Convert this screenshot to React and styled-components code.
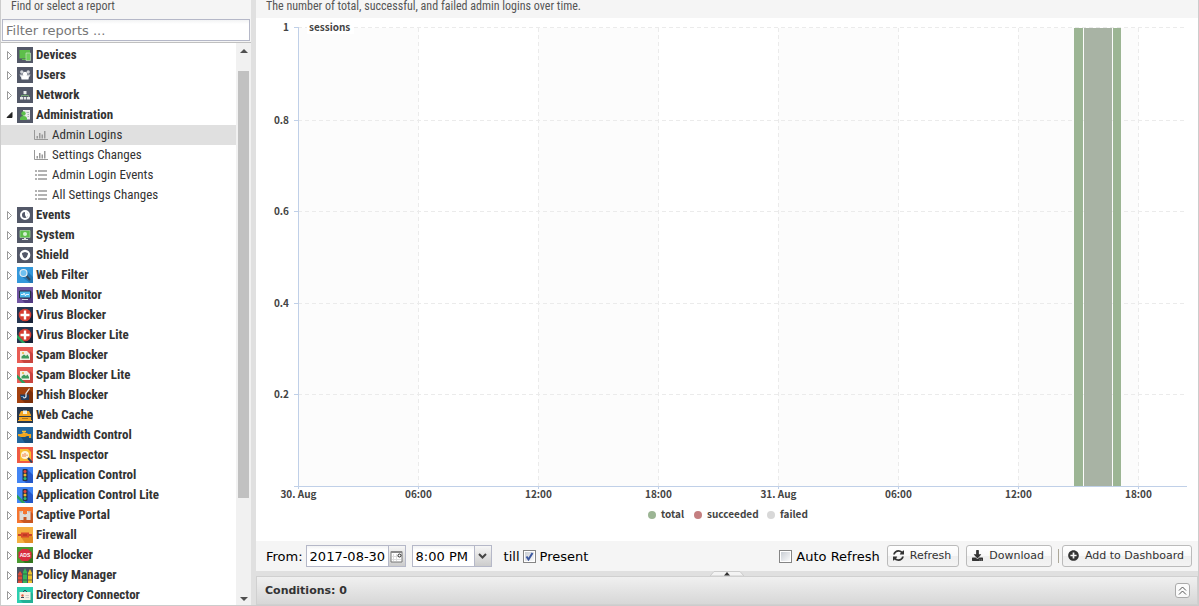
import React, { useLayoutEffect, useRef, useState } from 'react'
import styled, { createGlobalStyle, css } from 'styled-components'
import { FaDownload, FaPlusCircle } from 'react-icons/fa'

const condensed = '"Roboto Condensed", Roboto, sans-serif'
const dejavu = '"DejaVu Sans", Verdana, sans-serif'
const chartFont = '"Noto Sans CJK JP", "Noto Sans", sans-serif'

const GlobalStyle = createGlobalStyle`
  * {
    box-sizing: border-box;
  }
  body {
    margin: 0;
    background: #e0e0e0;
    font-family: ${dejavu};
  }
`

const Page = styled.div`
  display: flex;
  height: 100vh;
  gap: 5px;
  overflow: hidden;
  border: solid #ccc;
  border-width: 0 1px 1px;
`

const Sidebar = styled.aside`
  display: flex;
  flex-direction: column;
  flex: 0 0 250px;
  min-height: 0;
`

const Content = styled.main`
  display: flex;
  flex-direction: column;
  flex: 1;
  min-width: 0;
`

const Header = styled.header`
  height: 18px;
  padding: 0 10px;
  background: #f5f5f5;
  color: #555;
  font: 12px/12px ${condensed};
  white-space: nowrap;
`

const FilterBox = styled.div`
  padding: 1px;
  border-bottom: 1px solid #c0c0c0;
  background: #f5f5f5;
`

const inputLook = css`
  border: 1px solid #b5b8c8;
  border-radius: 0;
  outline: none;
  background: linear-gradient(#f2f3f4, #fff 4px);
  color: #000;
  font: 13px ${dejavu};
`

const FilterInput = styled.input`
  ${inputLook}
  display: block;
  width: 100%;
  height: 22px;
  padding: 0 3px;
  &::placeholder {
    color: #777;
    opacity: 1;
  }
`

const TreeArea = styled.div`
  display: flex;
  flex: 1;
  min-height: 0;
  background: #fff;
`

const Tree = styled.ul`
  flex: 1;
  margin: 0;
  padding: 2px 0 0;
  overflow: hidden;
  list-style: none;
`

const Row = styled.li`
  display: flex;
  align-items: center;
  gap: ${(p) => (p.$leaf ? 4 : 3)}px;
  height: 20px;
  padding-left: ${(p) => (p.$leaf ? 33 : 5)}px;
  background: ${(p) => (p.$selected ? '#e0e0e0' : 'none')};
  color: #333;
  font: ${(p) => (p.$leaf ? 400 : 700)} 13px/20px ${condensed};
  white-space: nowrap;
  cursor: pointer;
  svg {
    flex: none;
  }
`

const Scrollbar = styled.div`
  display: flex;
  flex-direction: column;
  align-items: center;
  justify-content: space-between;
  width: 15px;
  padding: 6px 0 4px;
  background: #f1f1f1;
`

const Track = styled.div`
  flex: 1;
  width: 11px;
  margin: 18px 0 5px;
`

const Thumb = styled.div`
  height: 82%;
  background: #c1c1c1;
`

const ScrollArrow = styled.span`
  border: solid transparent;
  border-width: 0 4px;
  ${(p) => (p.$up ? 'border-bottom: 4px solid #505050' : 'border-top: 4px solid #505050')};
`

const ChartArea = styled.div`
  flex: 1;
  min-height: 0;
  overflow: hidden;
  background: #fff;
  svg {
    display: block;
  }
`

const AxisText = styled.text`
  fill: #444;
  font: 700 10px ${chartFont};
`

const Toolbar = styled.div`
  display: flex;
  align-items: center;
  height: 30px;
  padding: 0 6px 0 10px;
  background: #f5f5f5;
  color: #000;
  font-size: 13px;
  white-space: nowrap;
`

const Spacer = styled.span`
  flex: 1;
`

const Fields = styled.div`
  display: flex;
  gap: 6px;
  margin-left: 3px;
`

const Field = styled.span`
  position: relative;
  display: flex;
  width: ${(p) => p.$width}px;
  height: 22px;
`

const DateInput = styled.input`
  ${inputLook}
  width: 83px;
  padding: 0 3px;
`

const Trigger = styled.button`
  display: flex;
  align-items: center;
  justify-content: center;
  width: 17px;
  padding: 0;
  border: 1px solid #b5b8c8;
  border-left: 0;
  background: linear-gradient(#f6f6f6, #ccc);
`

const TimeSelect = styled.select`
  ${inputLook}
  appearance: none;
  width: 100%;
  padding: 0 3px;
`

const SelectArrow = styled.span`
  position: absolute;
  top: 1px;
  right: 1px;
  bottom: 1px;
  display: flex;
  align-items: center;
  justify-content: center;
  width: 17px;
  border-left: 1px solid #b5b8c8;
  background: linear-gradient(#f6f6f6, #ccc);
  pointer-events: none;
`

const CheckLabel = styled.label`
  display: flex;
  align-items: center;
  gap: 4px;
`

const Check = styled.input`
  appearance: none;
  width: 13px;
  height: 13px;
  margin: 0;
  border: 1px solid #858585;
  outline: 1px solid #fff;
  outline-offset: -2px;
  background: linear-gradient(135deg, #c4c9d0, #fff);
  &:checked {
    background: url("data:image/svg+xml,%3Csvg xmlns='http://www.w3.org/2000/svg' width='11' height='11'%3E%3Cpath d='M2.5 5.5L4.5 8.5L8.5 2' fill='none' stroke='%233c58a0' stroke-width='2'/%3E%3C/svg%3E"),
      linear-gradient(135deg, #c4c9d0, #fff);
  }
`

const Till = styled.span`
  margin: 0 3px 0 12px;
`

const Button = styled.button`
  display: flex;
  align-items: center;
  gap: 6px;
  height: 22px;
  margin-left: 7px;
  padding: 0 7px 1px 5px;
  border: 1px solid #bbb;
  border-radius: 3px;
  background: linear-gradient(#fff, #f9f9f9 48%, #efefef 52%, #f3f3f3);
  color: #333;
  font: 11px ${dejavu};
  svg {
    width: 11px;
    height: 11px;
  }
`

const Separator = styled.span`
  width: 1px;
  height: 14px;
  margin: 0 -4px 0 6px;
  background: #aca899;
`

const Splitter = styled.div`
  display: flex;
  justify-content: center;
  height: 5px;
  background: #e0e0e0;
`

const Conditions = styled.section`
  display: flex;
  align-items: center;
  justify-content: space-between;
  height: 29px;
  padding: 0 7px 0 8px;
  border: 1px solid #d0d0d0;
  background: linear-gradient(#f0f0f0, #d7d7d7);
  color: #333;
  font: 700 11px ${dejavu};
`

const Expand = styled.button`
  display: flex;
  align-items: center;
  justify-content: center;
  width: 15px;
  height: 15px;
  padding: 0;
  border: 1px solid #aaa;
  border-radius: 3px;
  background: #fafafa;
`

const lite = <path d="M0 7.5L8.500 16H5L0 11z" fill="#27a05c" />

const virus = (
  <>
    <path d="M11.500 3L16 8V16H8L3.500 12z" fill="#182238" />
    <circle cx="8" cy="8" r="6.300" fill="#d63c32" />
    <path d="M8 3.500V12.500M3.500 8H12.500" stroke="#fff" strokeWidth="2.400" />
  </>
)

const spam = (
  <>
    <path d="M13 4L16 7V16H7L3 12z" fill="#c9443e" />
    <path d="M3 4H13V13H3z" fill="#f1eee3" />
    <path d="M4.500 11V9.500L7 7.500L9 9L10.500 7.500L12 10V11.500H4.500z" fill="#3d9b5c" />
    <circle cx="6" cy="6" r="1" fill="#e8b53c" />
    <path d="M10 4L13 7V4z" fill="#e2574c" />
  </>
)

const traffic = (
  <>
    <path d="M10 2L16 8V16H9L6 13z" fill="#2558c8" />
    <rect x="5.500" y="2" width="5" height="12" rx="1" fill="#26334d" />
    <circle cx="8" cy="4.500" r="1.500" fill="#e5453b" />
    <circle cx="8" cy="8" r="1.500" fill="#f0b72e" />
    <circle cx="8" cy="11.500" r="1.500" fill="#2dbd6e" />
  </>
)

const slate = '#535868'

const icons = {
  devices: [slate, <>
    <path d="M2.500 3H13V11.500H2.500z" fill="#5dbf4a" />
    <path d="M5 12.500H9" stroke="#5dbf4a" />
    <path d="M9 6H13.500V13.500H9z" fill="#6fce5c" stroke="#d5e5d2" strokeWidth=".6" />
  </>],
  users: [slate, <>
    <g fill="#d3d5d9">
      <circle cx="4.800" cy="5" r="1.700" />
      <circle cx="11.200" cy="5" r="1.700" />
      <path d="M2.500 7.500H13.500L12.500 10H3.500z" />
    </g>
    <circle cx="8" cy="7" r="2.200" fill="#fff" />
    <path d="M4 9.500Q8 8 12 9.500L11.500 12.500H4.500z" fill="#fff" />
  </>],
  network: [slate, <>
    <path d="M8 5V8.500M4.500 11V8.500H11.500V11" fill="none" stroke="#78a876" />
    <path d="M6.500 4H9.500V7H6.500zM3 10H6V12.500H3zM6.700 10H9.300V12.500H6.700zM10 10H13V12.500H10z" fill="#e8e8ea" />
  </>],
  admin: [slate, <>
    <path d="M6 3H13V12.500H6z" fill="#ececec" />
    <path d="M9.500 5.500H12M10.500 7.500H12M10.500 9.500H12" stroke="#aab0b5" />
    <circle cx="6.500" cy="6.500" r="2.200" fill="#5dbf4a" />
    <path d="M3 13Q2.500 9 6.500 9Q10.500 9 10 13z" fill="#5dbf4a" />
  </>],
  events: [slate, <>
    <circle cx="8" cy="8" r="4" fill={slate} stroke="#fff" strokeWidth="2" />
    <path d="M8 4.500V8L9.500 11A3.500 3.500 0 0 0 8 4.500" fill="#fff" />
  </>],
  system: [slate, <>
    <path d="M3 3.500H13V10.500H3z" fill="#5dbf4a" stroke="#a8d8a0" strokeWidth=".7" />
    <circle cx="8" cy="7" r="2" fill="#d8f2d4" />
    <path d="M7 11H9V12H11V13H5V12H7z" fill="#dfe3e1" />
  </>],
  shield: [slate, <>
    <circle cx="8" cy="8" r="5.300" fill="#fff" />
    <path d="M5 6L8 5L11 6Q11 9.500 8 11.500Q5 9.500 5 6" fill={slate} />
  </>],
  webFilter: ['#3498db', <>
    <path d="M10 4L16 10V16H13L4 9z" fill="#2378b5" />
    <path d="M9.500 9L13 13" stroke="#34495e" strokeWidth="2" />
    <circle cx="6.500" cy="6" r="3.500" fill="#6fc0f0" stroke="#e6edf1" strokeWidth="1.200" />
  </>],
  webMonitor: ['#7155a3', <>
    <path d="M14 4L16 6V16H8L5 13z" fill="#513982" />
    <path d="M2.500 4H13.500V11H2.500z" fill="#4cb7e8" stroke="#273142" />
    <path d="M4 7.500H6.500L7 6L8.500 9L9 7.500H12" fill="none" stroke="#e6f7ff" />
    <path d="M5 12.500H11" stroke="#d8dce0" />
  </>],
  virus: ['#263651', virus],
  virusLite: ['#263651', <>{virus}{lite}</>],
  spam: ['#e85c54', spam],
  spamLite: ['#e85c54', <>{spam}{lite}</>],
  phish: ['#a3410f', <>
    <path d="M13 3L16 6V16H8L4 12z" fill="#7c300a" />
    <path d="M3 7.500H12V13H4z" fill="#263c5c" />
    <path d="M12.500 1.500L9 6.500V9.500Q8.500 11.500 6 10.500" fill="none" stroke="#e4e6e8" strokeWidth="1.300" />
    <path d="M4 9.500H7" stroke="#4c8fc4" />
  </>],
  cache: ['#27384f', <>
    <path d="M2 8L4 4H12L14 8V13H2z" fill="#f5a623" />
    <path d="M2 9.500H14" stroke="#27384f" />
    <path d="M6 3.500H10V7H6z" fill="#f5f0df" />
    <path d="M1 13.500H15" stroke="#f5a623" />
    <path d="M5 11.500H11" stroke="#b87512" />
  </>],
  bandwidth: ['#2468a0', <>
    <path d="M10 9L16 12V16H8L4 10z" fill="#194e7c" />
    <path d="M1 7H4L6 6H10L11 7H14V11H12V9H10L8 10H4L1 9z" fill="#f2a51e" />
    <path d="M5 4.500H9M7 4.500V7" stroke="#f8bd36" strokeWidth="1.300" />
  </>],
  ssl: ['#ef5a43', <>
    <path d="M3 2H11L14 5V14H3z" fill="#f8bd30" />
    <circle cx="8" cy="8" r="4" fill="#fff5d8" />
    <path d="M6 7V10M8 6V10M10 7.500V9" stroke="#ed7e48" />
    <path d="M11 11L15 15.500" stroke="#38425a" strokeWidth="2" />
  </>],
  app: ['#4285f4', traffic],
  appLite: ['#4285f4', <>{traffic}{lite}</>],
  captive: ['#f5752f', <>
    <path d="M13 4L16 7V16H7L3 13z" fill="#c95721" />
    <path d="M2.500 4H6V7H10V4H13.500V13H9.500V10H6.500V13H2.500z" fill="#dedbd7" />
    <path d="M4 4V5.500M12 4V5.500M8 7V8" stroke="#a5a3a2" />
  </>],
  firewall: ['#f5b041', <>
    <path d="M13 7L16 10V16H8L4 10z" fill="#e28b23" />
    <path d="M1 8H15" stroke="#c9432a" strokeWidth="2" />
    <path d="M4 5.500H12V10.500H4z" fill="#d9482b" />
    <path d="M6 8H10" stroke="#b33821" strokeWidth="1.500" />
  </>],
  ads: ['#4a9a31', <>
    <path d="M12 3L16 7V16H8L4 12z" fill="#34751f" />
    <path d="M5 2H11L14.500 5.500V10.500L11 14H5L1.500 10.500V5.500z" fill="#d92b3f" />
    <text x="8" y="10" textAnchor="middle" fontFamily="Liberation Sans" fontWeight="700" fontSize="5" fill="#fff">ADS</text>
  </>],
  policy: ['#4c5160', <>
    <path d="M1 16V7L3 4L5 7V16z" fill="#e04a38" />
    <path d="M6 16V5L8 1L10 5V16z" fill="#35b558" />
    <path d="M11 16V6L13 2L15 6V16z" fill="#eec22c" />
    <path d="M1 9H5M6 7H10M11 8H15M1 13H5M6 13H10M11 13H15" stroke="#35403f" strokeWidth=".7" />
  </>],
  directory: ['#2bcfb0', <>
    <path d="M14 5L16 7V16H6L3 13z" fill="#22b196" />
    <path d="M2.500 5H13.500V13H2.500z" fill="#f7f1e5" />
    <path d="M6 5L8 3L10 5" fill="none" stroke="#34495e" />
    <circle cx="5.500" cy="8.500" r="1.200" fill="#dd5d45" />
    <path d="M4 10.500H7" stroke="#34495e" />
    <path d="M8.500 8.500H12M8.500 10.500H12" stroke="#ccc" />
  </>],
}

const reports = [
  ['devices', 'Devices'],
  ['users', 'Users'],
  ['network', 'Network'],
  ['admin', 'Administration', [
    ['chart', 'Admin Logins'],
    ['chart', 'Settings Changes'],
    ['list', 'Admin Login Events'],
    ['list', 'All Settings Changes'],
  ]],
  ['events', 'Events'],
  ['system', 'System'],
  ['shield', 'Shield'],
  ['webFilter', 'Web Filter'],
  ['webMonitor', 'Web Monitor'],
  ['virus', 'Virus Blocker'],
  ['virusLite', 'Virus Blocker Lite'],
  ['spam', 'Spam Blocker'],
  ['spamLite', 'Spam Blocker Lite'],
  ['phish', 'Phish Blocker'],
  ['cache', 'Web Cache'],
  ['bandwidth', 'Bandwidth Control'],
  ['ssl', 'SSL Inspector'],
  ['app', 'Application Control'],
  ['appLite', 'Application Control Lite'],
  ['captive', 'Captive Portal'],
  ['firewall', 'Firewall'],
  ['ads', 'Ad Blocker'],
  ['policy', 'Policy Manager'],
  ['directory', 'Directory Connector'],
]

const CategoryIcon = ({ name }) => {
  const [color, drawing] = icons[name]
  return (
    <svg width="16" height="16" viewBox="0 0 16 16">
      <rect width="16" height="16" fill={color} />
      {drawing}
    </svg>
  )
}

const Toggle = ({ open }) => (
  <svg width="8" height="12" viewBox="0 0 8 12">
    {open ? (
      <path d="M6 3.500V8.500H1z" fill="#222" stroke="#222" />
    ) : (
      <path d="M1.500 2.500V10.500L5.500 6.500z" fill="#fff" stroke="#999" />
    )}
  </svg>
)

const ReportIcon = ({ type }) => (
  <svg width="14" height="12" viewBox="0 0 14 12">
    {type === 'list' ? (
      <path d="M1 2H3M1 6H3M1 10H3M4 2H13M4 6H13M4 10H13" stroke="#999" strokeWidth="1.600" />
    ) : (
      <>
        <path d="M.5 1V10.500H14" fill="none" stroke="#999" />
        <path d="M2.500 7H4V9.500H2.500zM5 4H6.500V9.500H5zM7.500 5.500H9V9.500H7.500zM10 2H11.500V9.500H10z" fill="#999" />
      </>
    )}
  </svg>
)

const RefreshIcon = () => (
  <svg viewBox="0 0 1536 1536" fill="currentColor">
    <path d="M1511 928q0 5-1 7-64 268-268 434.500T764 1536q-146 0-282.500-55T238 1324l-129 129q-19 19-45 19t-45-19-19-45V960q0-26 19-45t45-19h448q26 0 45 19t19 45-19 45l-137 137q71 66 161 102t187 36q134 0 250-65t186-179q11-17 53-117 8-23 30-23h192q13 0 22.500 9.500t9.500 22.500zm25-800v448q0 26-19 45t-45 19h-448q-26 0-45-19t-19-45 19-45l138-138Q969 256 768 256q-134 0-250 65T332 500q-11 17-53 117-8 23-30 23H50q-13 0-22.500-9.500T18 608v-7q65-268 270-434.500T768 0q146 0 284 55.500T1297 212l130-129q19-19 45-19t45 19 19 45z" />
  </svg>
)

const times = ['30. Aug', '06:00', '12:00', '18:00', '31. Aug', '06:00', '12:00', '18:00']
const hours = 44.45
// start and end as fractions of the plotted time span
const bars = [
  [0.873, 0.883, '#9cb594'],
  [0.8842, 0.9156, '#a8b3a4'],
  [0.9168, 0.9258, '#9cb594'],
]
const legend = [
  ['total', '#9cb594', -77],
  ['succeeded', '#c47f80', -31],
  ['failed', '#d8d8d8', 42],
]

const SessionsChart = () => {
  const ref = useRef(null)
  const [size, setSize] = useState({ width: 942, height: 523 })

  useLayoutEffect(() => {
    const measure = () =>
      setSize({ width: ref.current.clientWidth, height: ref.current.clientHeight })
    measure()
    window.addEventListener('resize', measure)
    return () => window.removeEventListener('resize', measure)
  }, [])

  const { width, height } = size
  const left = 42
  const top = 10
  const plotW = width - 53
  const bottom = height - 55
  const step = (plotW * 6) / hours
  const tickX = (i) => Math.round(left + i * step) + 0.5
  // the top line sits just above the plot so the bars don't cover it
  const tickY = (i) =>
    i === 5 ? top - 0.5 : Math.round(bottom - ((bottom - top) * i) / 5) + 0.5

  return (
    <ChartArea ref={ref}>
      <svg width={width} height={height} role="img" aria-label="Admin logins">
        {times.map((t, i) =>
          i % 2 === 0 ? (
            <rect key={i} x={tickX(i)} y={top} width={step} height={bottom - top} fill="#fcfcfc" />
          ) : null
        )}
        <g stroke="#ebebeb" strokeDasharray="4 3">
          {times.map((t, i) => (
            <path key={i} d={`M${tickX(i)} ${top}V${bottom}`} />
          ))}
          {[1, 2, 3, 4, 5].map((i) => (
            <path key={i} d={`M${left} ${tickY(i)}H${left + plotW - 2}`} />
          ))}
        </g>
        {bars.map(([from, to, color]) => (
          <rect
            key={from}
            x={Math.round(left + from * plotW)}
            y={top}
            width={Math.round((to - from) * plotW)}
            height={bottom - top}
            fill={color}
          />
        ))}
        <g stroke="#c0d0e8">
          <path d={`M${left + 0.5} ${top}V${bottom}M${left - 4} ${bottom + 0.5}H${left + plotW}`} />
          {times.map((t, i) => (
            <path key={i} d={`M${tickX(i)} ${bottom}v3`} />
          ))}
          {[1, 2, 3, 4, 5].map((i) => (
            <path key={i} d={`M${left - 4} ${tickY(i)}h5`} />
          ))}
        </g>
        {[1, 2, 3, 4, 5].map((i) => (
          <AxisText key={i} x={left - 9} y={Math.ceil(tickY(i)) + 3} textAnchor="end">
            {i / 5}
          </AxisText>
        ))}
        {times.map((t, i) => (
          <AxisText key={i} x={tickX(i)} y={bottom + 12} textAnchor="middle">
            {t}
          </AxisText>
        ))}
        <rect x={left + 9} y="4" width="47" height="12" fill="#fff" />
        <AxisText x={left + 11} y={top + 3}>sessions</AxisText>
        {legend.map(([name, color, offset]) => (
          <g key={name} transform={`translate(${Math.round(width / 2) + 2 + offset} ${bottom + 29})`}>
            <circle cx="0" cy="0" r="4" fill={color} />
            <AxisText x="9" y="3">{name}</AxisText>
          </g>
        ))}
      </svg>
    </ChartArea>
  )
}

const ReportTree = () => (
  <TreeArea>
    <Tree>
      {reports.map(([icon, name, children]) => (
        <React.Fragment key={name}>
          <Row>
            <Toggle open={!!children} />
            <CategoryIcon name={icon} />
            {name}
          </Row>
          {children &&
            children.map(([type, label]) => (
              <Row key={label} $leaf $selected={label === 'Admin Logins'}>
                <ReportIcon type={type} />
                {label}
              </Row>
            ))}
        </React.Fragment>
      ))}
    </Tree>
    <Scrollbar>
      <ScrollArrow $up />
      <Track>
        <Thumb />
      </Track>
      <ScrollArrow />
    </Scrollbar>
  </TreeArea>
)

const App = () => {
  const [present, setPresent] = useState(true)
  const [auto, setAuto] = useState(false)

  return (
    <>
      <GlobalStyle />
      <Page>
        <Sidebar>
          <Header>Find or select a report</Header>
          <FilterBox>
            <FilterInput aria-label="Filter reports" placeholder="Filter reports ..." />
          </FilterBox>
          <ReportTree />
        </Sidebar>
        <Content>
          <Header>The number of total, successful, and failed admin logins over time.</Header>
          <SessionsChart />
          <Toolbar>
            <label htmlFor="from-date">From:</label>
            <Fields>
              <Field $width={100}>
                <DateInput id="from-date" defaultValue="2017-08-30" />
                <Trigger aria-label="Pick a date">
                  <svg width="13" height="13" viewBox="0 0 13 13">
                    <path d="M1 1.500H12V12H1z" fill="#fff" stroke="#777" />
                    <path d="M1 2H12" stroke="#888" strokeWidth="2" />
                    <path d="M3.500 4V11M6.500 4V11M2 6.500H11M2 9.500H11" stroke="#ddd" />
                    <circle cx="9.500" cy="5.500" r="1.500" fill="#fff" stroke="#222" />
                  </svg>
                </Trigger>
              </Field>
              <Field $width={80}>
                <TimeSelect aria-label="From time" defaultValue="8:00 PM">
                  <option>8:00 PM</option>
                </TimeSelect>
                <SelectArrow>
                  <svg width="9" height="6" viewBox="0 0 9 6">
                    <path d="M1 1L4.500 4.500L8 1" fill="none" stroke="#444" strokeWidth="2" />
                  </svg>
                </SelectArrow>
              </Field>
            </Fields>
            <Till>till</Till>
            <CheckLabel>
              <Check type="checkbox" checked={present} onChange={() => setPresent(!present)} />
              Present
            </CheckLabel>
            <Spacer />
            <CheckLabel>
              <Check type="checkbox" checked={auto} onChange={() => setAuto(!auto)} />
              Auto Refresh
            </CheckLabel>
            <Button>
              <RefreshIcon />
              Refresh
            </Button>
            <Button>
              <FaDownload />
              Download
            </Button>
            <Separator />
            <Button>
              <FaPlusCircle />
              Add to Dashboard
            </Button>
          </Toolbar>
          <Splitter>
            <svg width="34" height="5" viewBox="0 0 34 5">
              <path d="M0 5L4 .5H30L34 5z" fill="#f3f3f3" stroke="#ccc" />
              <path d="M14 4.500L17 1L20 4.500z" fill="#333" />
            </svg>
          </Splitter>
          <Conditions>
            Conditions: 0
            <Expand aria-label="Expand conditions">
              <svg width="9" height="9" viewBox="0 0 9 9">
                <path d="M1 4.500L4.500 1L8 4.500M1 8.500L4.500 5L8 8.500" fill="none" stroke="#555" />
              </svg>
            </Expand>
          </Conditions>
        </Content>
      </Page>
    </>
  )
}

export default App
